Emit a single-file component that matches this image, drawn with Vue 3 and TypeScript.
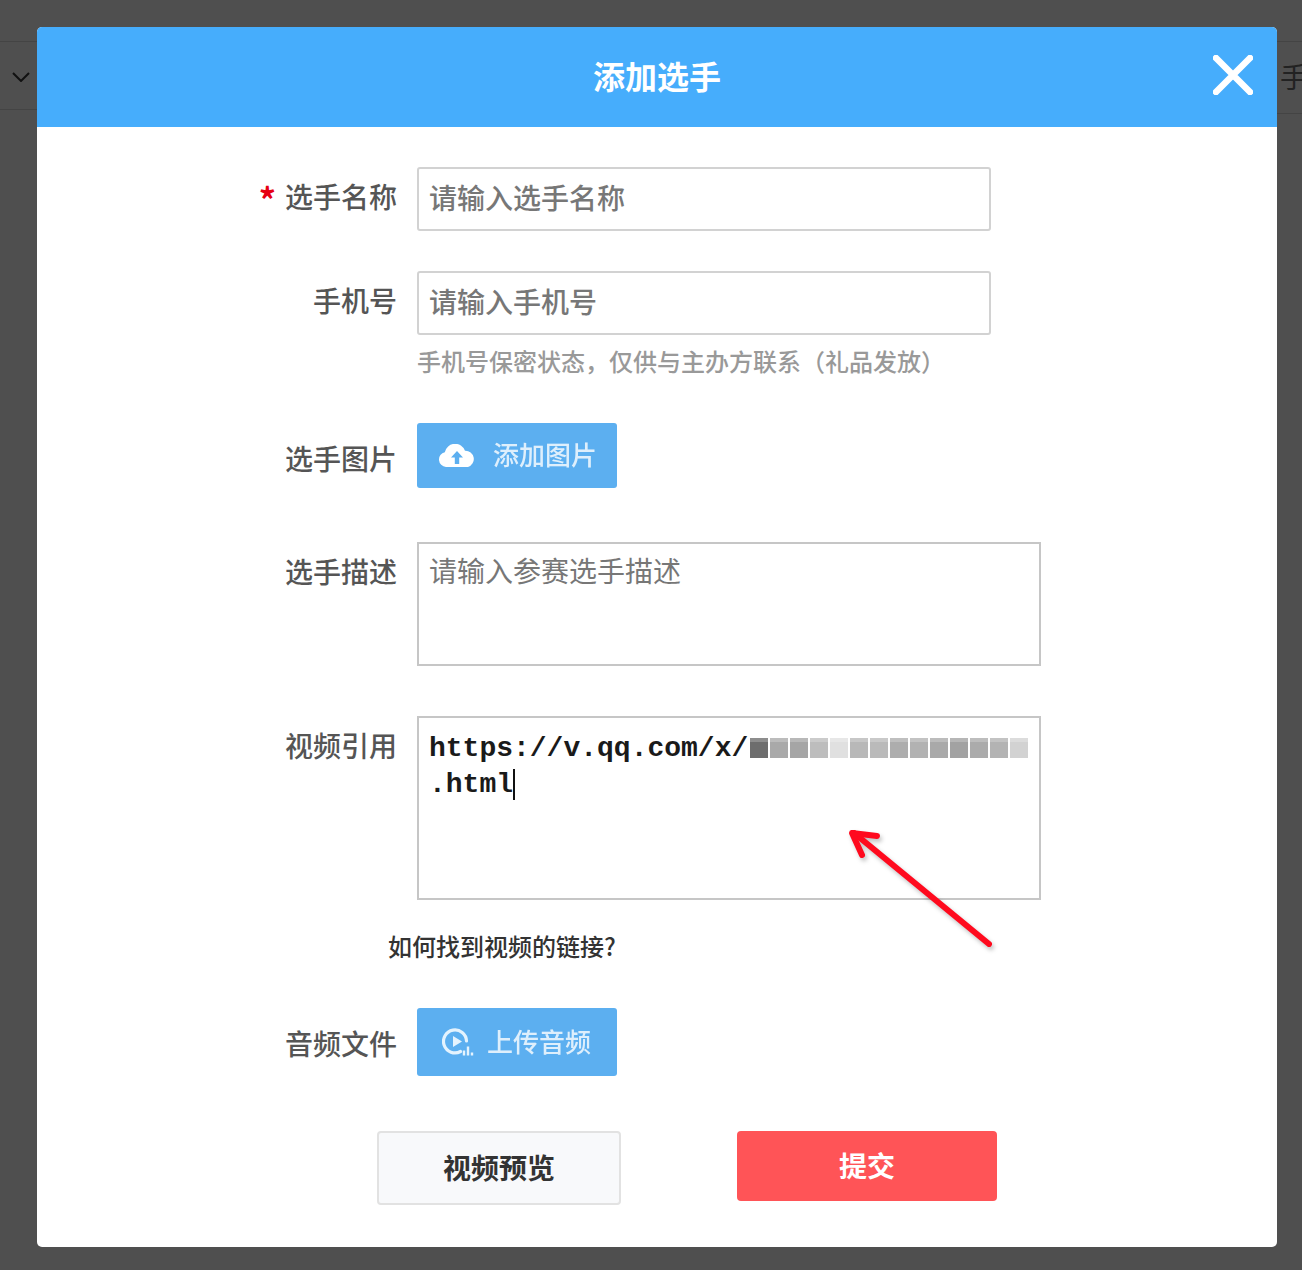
<template>
  <div class="page">
    <div class="backdrop">
      <div class="back-left">
        <svg class="chevron" width="18" height="10" viewBox="0 0 18 10">
          <path d="M1 1l8 8 8-8" fill="none" stroke="#111" stroke-width="2" />
        </svg>
      </div>
      <div class="back-right">手</div>
    </div>

    <div class="modal">
      <div class="modal-header">
        <h1>添加选手</h1>
        <svg class="close" width="40" height="40" viewBox="0 0 40 40">
          <path d="M3 3l34 34M37 3L3 37" stroke="#fff" stroke-width="6.5" stroke-linecap="round" />
        </svg>
      </div>

      <div class="modal-body">
        <div class="row">
          <label class="label label-input"><span class="star">*</span>选手名称</label>
          <input class="field short" placeholder="请输入选手名称" />
        </div>

        <div class="row phone-row">
          <label class="label label-input">手机号</label>
          <input class="field short" placeholder="请输入手机号" />
        </div>
        <div class="row">
          <span></span>
          <p class="hint">手机号保密状态，仅供与主办方联系（礼品发放）</p>
        </div>

        <div class="row photo-row">
          <label class="label label-photo">选手图片</label>
          <button class="upload upload-photo">
            <svg width="38" height="24" viewBox="0 0 38 24">
              <path d="M8 23a7.500 7.500 0 0 1-1.200-14.800A10.500 10.500 0 0 1 27 6.800 8.300 8.300 0 0 1 30 23z" fill="#fff" />
              <path d="M19 7l-6 6.500h3.800V20h4.400v-6.500H25z" fill="#5caff0" />
            </svg>
            <span>添加图片</span>
          </button>
        </div>

        <div class="row desc-row">
          <label class="label label-area">选手描述</label>
          <textarea class="field area" placeholder="请输入参赛选手描述"></textarea>
        </div>

        <div class="row video-row">
          <label class="label label-area">视频引用</label>
          <div class="field video">
            <div class="url-line">https://v.qq.com/x/<span class="blur"><i v-for="(c, i) in blurCells" :key="i" :style="{ background: c }"></i></span></div>
            <div class="url-line">.html<span class="caret"></span></div>
          </div>
        </div>

        <div class="link-line">如何找到视频的链接?</div>

        <div class="row audio-row">
          <label class="label label-audio">音频文件</label>
          <button class="upload upload-audio">
            <svg width="32" height="28" viewBox="0 0 32 28">
              <path d="M18.500 23.500A11.500 11.500 0 1 1 24.500 13" fill="none" stroke="#e4f3fe" stroke-width="3.200" stroke-linecap="round" />
              <path d="M11 8l9 5.500-9 5.500z" fill="#e4f3fe" />
              <path d="M22 27.500v-5M26 27.500v-9M30 27.500v-3" stroke="#e4f3fe" stroke-width="2.400" />
            </svg>
            <span>上传音频</span>
          </button>
        </div>

        <div class="actions">
          <button class="btn-preview">视频预览</button>
          <button class="btn-submit">提交</button>
        </div>
      </div>

      <!-- red annotation drawn on top of the screenshot -->
      <svg class="arrow" width="160" height="132" viewBox="0 0 160 132">
        <g fill="none" stroke="#ff0a1e" stroke-width="6" stroke-linecap="round" stroke-linejoin="round">
          <path d="M149 119L14 8" />
          <path d="M37 11L12 8l10 22" />
        </g>
      </svg>
    </div>
  </div>
</template>

<script setup lang="ts">
const blurCells: string[] = [
  "#6d6d6d",
  "#a9a9a9",
  "#a5a5a5",
  "#bdbdbd",
  "#e0e0e0",
  "#b8b8b8",
  "#bababa",
  "#adadad",
  "#b2b2b2",
  "#a9a9a9",
  "#a2a2a2",
  "#ababab",
  "#b3b3b3",
  "#d2d2d2",
];
</script>

<style>
html,
body {
  background: #4f4f4f;
}
</style>

<style scoped>
.page {
  position: relative;
  height: 1270px;
  background: #4f4f4f;
  overflow: hidden;
  font-family: "Noto Sans CJK SC", sans-serif;
}

.backdrop {
  display: flex;
  justify-content: space-between;
  padding-top: 41px;
}

.back-left {
  width: 60px;
  height: 69px;
  box-sizing: border-box;
  border-top: 1px solid #444;
  border-bottom: 1px solid #444;
  padding: 30px 0 0 12px;
}

.chevron {
  display: block;
}

.back-right {
  width: 60px;
  height: 73px;
  box-sizing: border-box;
  border-top: 1px solid #444;
  border-bottom: 1px solid #444;
  padding-left: 38px;
  font-size: 28px;
  line-height: 68px;
  color: #222;
  white-space: nowrap;
}

.modal {
  position: absolute;
  left: 37px;
  top: 27px;
  width: 1240px;
  height: 1220px;
  background: #fff;
  border-radius: 5px;
  overflow: hidden;
}

.modal-header {
  position: relative;
  box-sizing: border-box;
  height: 100px;
  padding-bottom: 4px;
  background: #46adfc;
  display: flex;
  align-items: center;
  justify-content: center;
}

.modal-header h1 {
  margin: 0;
  font-size: 32px;
  font-weight: 700;
  color: #fff;
}

.close {
  position: absolute;
  right: 24px;
  top: 28px;
}

.modal-body {
  padding-top: 40px;
}

.row {
  display: grid;
  grid-template-columns: 360px 1fr;
  column-gap: 20px;
}

.label {
  text-align: right;
  font-size: 28px;
  font-weight: 500;
  line-height: 40px;
  color: #555;
}

.label-input {
  padding-top: 9px;
}

.label-photo {
  padding-top: 15px;
}

.label-area {
  padding-top: 9px;
}

.label-audio {
  padding-top: 15px;
}

.star {
  color: #e60012;
  margin-right: 9px;
  font-size: 34px;
  line-height: 0;
  font-weight: 700;
  vertical-align: -5px;
}

.field {
  box-sizing: border-box;
  display: block;
  border: 2px solid #d2d2d2;
  border-radius: 0;
  background: #fff;
  outline: none;
  font-family: "Noto Sans CJK SC", sans-serif;
  font-size: 28px;
  font-weight: 500;
  color: #333;
}

.field::placeholder {
  color: #777;
}

.short {
  width: 574px;
  height: 64px;
  padding: 0 10px 4px;
  border-radius: 3px;
}

.phone-row {
  margin-top: 40px;
}

.hint {
  margin: 8px 0 0;
  font-size: 24px;
  font-weight: 500;
  line-height: 36px;
  color: #999;
}

.photo-row {
  margin-top: 44px;
}

.upload {
  display: flex;
  align-items: center;
  width: 200px;
  border: none;
  border-radius: 3px;
  background: #5caff0;
  color: rgba(255, 255, 255, 0.8);
  font-family: "Noto Sans CJK SC", sans-serif;
  font-size: 26px;
  font-weight: 500;
  padding: 0;
}

.upload span {
  margin-bottom: 4px;
  filter: blur(0.4px);
}

.upload-photo {
  height: 65px;
  padding-left: 21px;
  gap: 17px;
}

.upload-audio {
  height: 68px;
  padding-left: 25px;
  gap: 13px;
}

.desc-row {
  margin-top: 54px;
}

.area {
  width: 624px;
  height: 124px;
  padding: 6px 10px;
  line-height: 40px;
  font-weight: 400;
  resize: none;
  border-color: #c6c6c6;
}

.video-row {
  margin-top: 50px;
}

.video {
  width: 624px;
  height: 184px;
  padding: 12px 10px;
  border-color: #c6c6c6;
  font-family: "Liberation Mono", monospace;
  color: #1a1a1a;
  font-weight: 700;
}

.url-line {
  display: flex;
  align-items: center;
  height: 36px;
  white-space: pre;
}

.blur {
  display: flex;
  margin-left: 2px;
  filter: blur(0.7px);
}

.blur i {
  display: block;
  width: 18px;
  height: 20px;
  margin-right: 2px;
  box-shadow: inset 0 4px 0 rgba(255, 255, 255, 0.22);
}

.caret {
  display: block;
  width: 2px;
  height: 31px;
  background: #111;
}

.link-line {
  margin: 28px 0 0 351px;
  font-size: 24px;
  font-weight: 500;
  line-height: 36px;
  color: #333;
}

.audio-row {
  margin-top: 44px;
}

.actions {
  display: flex;
  align-items: flex-start;
  gap: 116px;
  margin: 55px 0 0 340px;
}

.actions button {
  box-sizing: border-box;
  border-radius: 4px;
  font-family: "Noto Sans CJK SC", sans-serif;
  font-size: 28px;
  font-weight: 700;
}

.btn-preview {
  width: 244px;
  height: 74px;
  padding-bottom: 4px;
  background: #f8f9fb;
  border: 2px solid #e2e2e2;
  color: #333;
}

.btn-submit {
  width: 260px;
  height: 70px;
  padding-bottom: 4px;
  background: #ff5457;
  border: none;
  color: #fff;
}

.arrow {
  position: absolute;
  left: 803px;
  top: 798px;
  filter: drop-shadow(2px 3px 2px rgba(0, 0, 0, 0.25));
}
</style>
